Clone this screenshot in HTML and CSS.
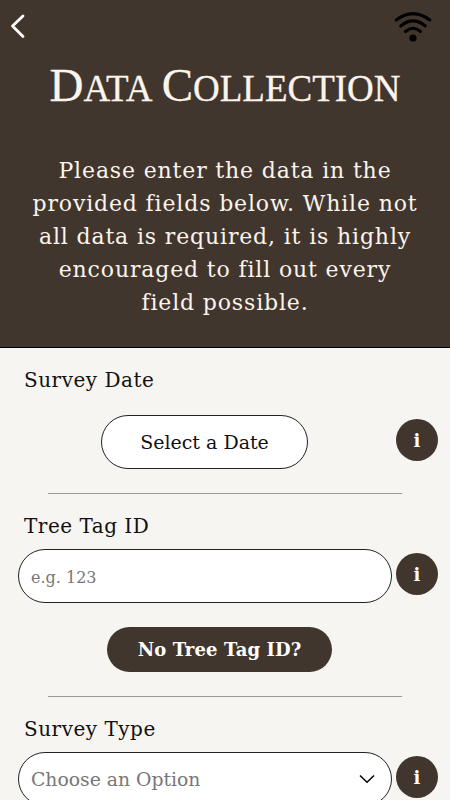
FILE: index.html
```html
<!DOCTYPE html>
<html lang="en">
<head>
    <meta charset="UTF-8">
    <title>Data Collection</title>
    <link rel="stylesheet" href="styles.css">
</head>
<body>
    <header class="header">
        <div class="topbar">
            <svg class="back" width="16" height="26" viewBox="0 0 16 26">
                <path d="M13 3 L2.5 13 L13 23.5" fill="none" stroke="#fff" stroke-width="2.8" stroke-linecap="round" stroke-linejoin="round"/>
            </svg>
            <svg class="wifi" width="38" height="32" viewBox="0 0 38 32">
                <g fill="none" stroke="#000" stroke-width="3" stroke-linecap="round">
                    <path d="M2.2 9 Q19 -3.8 35.8 9"/>
                    <path d="M6.7 15 Q19 4.8 31.3 15"/>
                    <path d="M11.5 20.5 Q19 14 26.5 20.5"/>
                </g>
                <circle cx="19" cy="27" r="3.6"/>
            </svg>
        </div>
        <h1 class="title"><span class="word">Data</span> <span class="word">Collection</span></h1>
        <p class="intro">Please enter the data in the<br>provided fields below. While not<br>all data is required, it is highly<br>encouraged to fill out every<br>field possible.</p>
    </header>
    <main class="form">
        <section class="field date-field">
            <label class="label">Survey Date</label>
            <div class="row">
                <button class="date-btn">Select a Date</button>
                <button class="info">i</button>
            </div>
        </section>
        <section class="field tag-field">
            <label class="label">Tree Tag ID</label>
            <div class="row">
                <input class="control" type="text" placeholder="e.g. 123">
                <button class="info">i</button>
            </div>
            <button class="no-tag">No Tree Tag ID?</button>
        </section>
        <section class="field type-field">
            <label class="label">Survey Type</label>
            <div class="row">
                <div class="control select">
                    <span>Choose an Option</span>
                    <svg width="16" height="10" viewBox="0 0 16 10">
                        <path d="M1 1.5 L8 8.3 L15 1.5" fill="none" stroke="#000" stroke-width="1.5"/>
                    </svg>
                </div>
                <button class="info">i</button>
            </div>
        </section>
    </main>
</body>
</html>
```
FILE: styles.css
```css
* {
    box-sizing: border-box;
}
body {
    margin: 0;
    height: 800px;
    overflow: hidden;
    background-color: #f7f5f1;
    color: #111;
    font-family: "DejaVu Serif", serif;
}
button, input {
    font-family: inherit;
    padding: 0;
    margin: 0;
}
.header {
    height: 348px;
    background-color: #41362d;
    border-bottom: 1px solid #000;
    color: #fbf4ec;
    text-align: center;
}
.topbar {
    display: flex;
    justify-content: space-between;
    padding: 11px 18px 0 10px;
    height: 55px;
}
.back {
    margin-top: 2px;
}
.title {
    margin: 0;
    height: 99px;
    line-height: 60px;
    font-family: "Liberation Serif", serif;
    font-size: 37px;
    font-weight: normal;
    text-transform: uppercase;
    white-space: nowrap;
    -webkit-text-stroke: 0.3px #fbf4ec;
}
.word {
    display: inline-block;
}
.word::first-letter {
    font-size: 47px;
}
.intro {
    margin: 0;
    font-size: 22px;
    line-height: 33px;
    letter-spacing: 0.85px;
    white-space: nowrap;
}
.field {
    padding: 17px 12px 0 18px;
}
.label {
    display: block;
    padding-left: 6px;
    height: 30px;
    line-height: 30px;
    font-size: 20px;
    letter-spacing: 0.5px;
}
.row {
    display: flex;
    align-items: center;
    justify-content: space-between;
    height: 54px;
    margin-top: 8px;
}
.date-field .row {
    margin-top: 20px;
    padding-left: 83px;
}
.date-btn {
    width: 207px;
    height: 54px;
    border: 1px solid #222;
    border-radius: 27px;
    background-color: #fff;
    color: #111;
    font-size: 19px;
}
.info {
    width: 42px;
    height: 42px;
    margin-bottom: 4px;
    border: none;
    border-radius: 50%;
    background-color: #41362d;
    color: #fff;
    font-size: 18px;
    font-weight: bold;
}
.date-field::after, .tag-field::after {
    content: "";
    display: block;
    height: 1px;
    margin: 24px 36px 0 30px;
    background-color: #999;
}
.control {
    width: 374px;
    height: 54px;
    padding: 0 16px 0 12px;
    border: 1px solid #222;
    border-radius: 27px;
    background-color: #fff;
    font-size: 18.8px;
    color: #777;
}
.control::placeholder {
    color: #777;
    font-size: 16px;
}
.no-tag {
    display: block;
    width: 225px;
    height: 45px;
    margin: 24px 0 0 89px;
    border: none;
    border-radius: 23px;
    background-color: #41362d;
    color: #fff;
    font-size: 18px;
    font-weight: bold;
    letter-spacing: 0.1px;
}
.select {
    display: flex;
    align-items: center;
    justify-content: space-between;
}
```
